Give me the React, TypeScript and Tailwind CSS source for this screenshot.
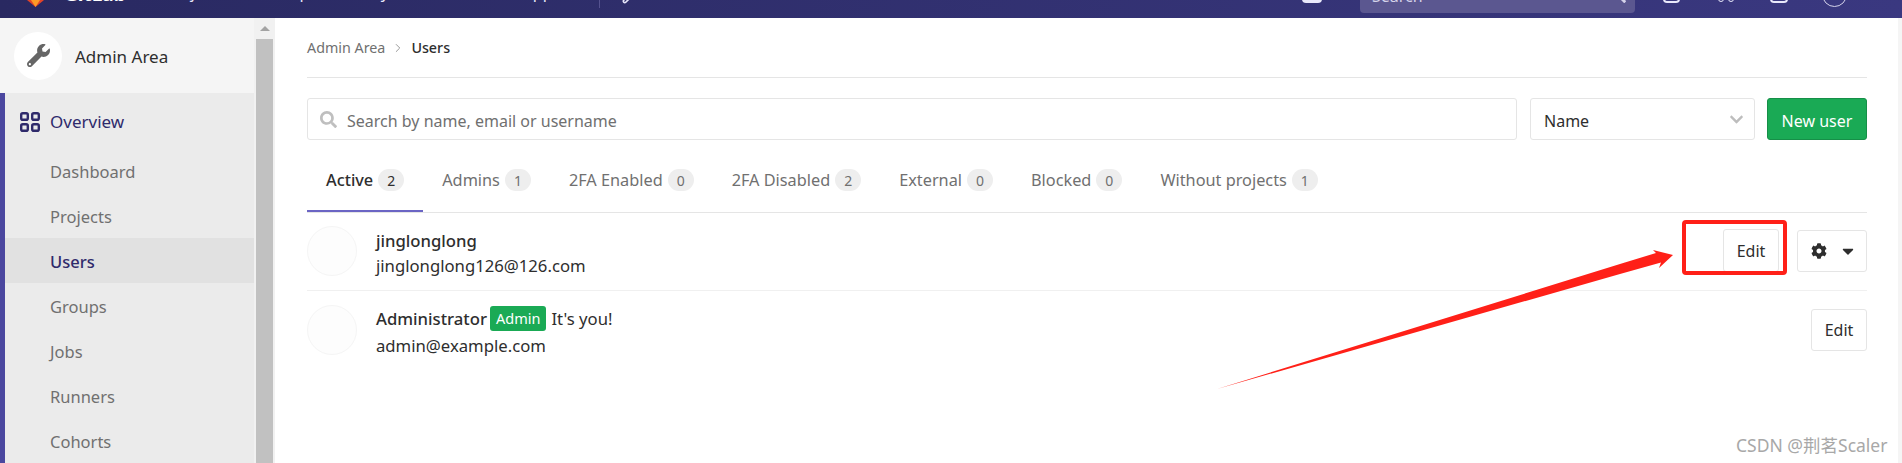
import { ChevronRight, Wrench } from "lucide-react"
import { FaCaretDown, FaChevronDown, FaCog, FaSearch, FaWrench } from "react-icons/fa"

const font = "font-['Noto_Sans','Noto_Sans_CJK_SC',sans-serif]"

const tabs = [
  { label: "Active", count: 2, active: true },
  { label: "Admins", count: 1 },
  { label: "2FA Enabled", count: 0 },
  { label: "2FA Disabled", count: 2 },
  { label: "External", count: 0 },
  { label: "Blocked", count: 0 },
  { label: "Without projects", count: 1 },
]

const sideLinks = ["Dashboard", "Projects", "Users", "Groups", "Jobs", "Runners", "Cohorts"]

function OverviewIcon() {
  return (
    <svg width="20" height="20" viewBox="0 0 20 20" fill="none" stroke="#2f2a6b" strokeWidth="2.4">
      <rect x="1.2" y="1.2" width="6.6" height="6.6" rx="1.6" />
      <rect x="12.2" y="1.2" width="6.6" height="6.6" rx="1.6" />
      <rect x="1.2" y="12.2" width="6.6" height="6.6" rx="1.6" />
      <rect x="12.2" y="12.2" width="6.6" height="6.6" rx="1.6" />
    </svg>
  )
}

// the screenshot is cut off at the top, so the bar's content hangs above the page edge
function TopBar() {
  return (
    <header className="h-[18px] overflow-hidden bg-gradient-to-r from-[#292961] to-[#3a3880] text-white">
      <div className="-mt-[22px] flex h-[40px] items-start text-[16px] leading-[22px] text-[#e6e6fa]">
        <svg width="17" height="7" viewBox="0 0 17 7" className="ml-[27px] mt-[22px] shrink-0">
          <path d="M8.5 7 L0 0 L17 0 Z" fill="#e24329" />
          <path d="M8.5 7 L4 0 L13 0 Z" fill="#fc9a26" />
        </svg>
        <span className="ml-[20px] mt-[3px] w-[61px] text-[19px] font-bold leading-[27px] text-white">GitLab</span>
        <span className="ml-[40px] mt-[3px] w-[65px]">Projects</span>
        <span className="ml-[32px] mt-[3px] w-[60px]">Groups</span>
        <span className="ml-[13px] mt-[3px] w-[60px]">Activity</span>
        <span className="ml-[15px] mt-[3px] w-[85px]">Milestones</span>
        <span className="ml-[15px] mt-[3px] w-[70px]">Snippets</span>
        <div className="ml-[19px] mt-[14px] h-[16px] w-px bg-[#55528f]" />
        <Wrench className="ml-[22px] mt-[10px] h-[16px] w-[16px]" strokeWidth={2.5} />
        <div className="flex-1" />
        <div className="mt-[6px] h-[19px] w-[20px] rounded-[4px] bg-[#e9e9fb]" />
        <div className="relative ml-[38px] mt-[2px] h-[33px] w-[275px] rounded-[4px] bg-[#5b5790] pl-[12px] pt-[5px] text-[#d5d3ea]">
          Search
          <FaSearch className="absolute right-[9px] top-[6px] h-[17px] w-[17px]" />
        </div>
        <div className="ml-[28px] mt-[6px] h-[19px] w-[17px] rounded-[4px] border-2 border-[#e9e9fb]" />
        <div className="ml-[38px] mt-[6px] flex h-[18px] w-[16px] justify-between">
          <div className="h-[6px] w-[6px] self-end rounded-full border-[1.5px] border-[#e9e9fb]" />
          <div className="h-[6px] w-[6px] self-end rounded-full border-[1.5px] border-[#e9e9fb]" />
        </div>
        <div className="ml-[36px] mt-[6px] h-[19px] w-[18px] rounded-[4px] border-2 border-[#e9e9fb]" />
        <div className="ml-[34px] mt-[4px] h-[25px] w-[25px] rounded-full border border-[#d5d3ea]" />
        <div className="w-[55px]" />
      </div>
    </header>
  )
}

function Sidebar() {
  return (
    <aside className="relative flex w-[275px] shrink-0">
      <div className="w-[254px] bg-[#ebebeb]">
        <div className="flex h-[75px] items-center bg-[#f5f5f5] pl-[14px]">
          <div className="flex h-[48px] w-[48px] items-center justify-center rounded-full bg-white">
            <FaWrench className="h-[23px] w-[23px] text-[#666]" />
          </div>
          <span className="ml-[13px] pt-[2px] text-[17px] text-[#2e2e2e]">Admin Area</span>
        </div>
        <div className="h-[370px] border-l-[5px] border-[#4b479f]">
          <div className="flex h-[55px] items-center pl-[15px] pt-[3px] text-[17px] text-[#2f2a6b]">
            <OverviewIcon />
            <span className="ml-[10px]">Overview</span>
          </div>
          {sideLinks.map((link) => (
            <div
              key={link}
              className={
                link === "Users"
                  ? "flex h-[45px] items-center bg-[#e1e1e1] pl-[45px] pt-[4px] text-[16.5px] font-medium text-[#2f2a6b]"
                  : "flex h-[45px] items-center pl-[45px] pt-[4px] text-[16.5px] text-[#707070]"
              }
            >
              {link}
            </div>
          ))}
        </div>
      </div>
      <div className="flex w-[21px] flex-col bg-[#f1f1f1] pl-[2px] pr-[2px]">
        <div className="flex h-[21px] items-center justify-center">
          <div className="h-0 w-0 border-x-[5px] border-b-[5px] border-x-transparent border-b-[#a3a3a3]" />
        </div>
        <div className="flex-1 bg-[#c1c1c1]" />
      </div>
    </aside>
  )
}

function UserRow({ children, actions, first }: { children: React.ReactNode; actions: React.ReactNode; first?: boolean }) {
  return (
    <div className={first ? "flex h-[78px] items-center border-b border-[#f0f0f0] pb-[2px]" : "flex h-[77px] items-center"}>
      <div className="h-[50px] w-[50px] shrink-0 rounded-full border border-[#f5f5f5] bg-[#fdfdfd]" />
      <div className="ml-[19px] mt-[4px] flex-1 text-[16.7px] text-[#2e2e2e]">{children}</div>
      {actions}
    </div>
  )
}

export default function App() {
  return (
    <div className={`relative h-[463px] w-[1902px] overflow-hidden bg-white ${font}`}>
      <TopBar />
      <div className="flex h-[445px]">
        <Sidebar />
        <main className="flex-1 pl-[32px] pr-[31px]">
          <div className="flex h-[60px] items-center border-b border-[#e5e5e5] text-[14.3px]">
            <span className="text-[#707070]">Admin Area</span>
            <ChevronRight className="mx-[6px] h-[14px] w-[14px] text-[#8c8c8c]" strokeWidth={1.5} />
            <span className="font-medium text-[#2e2e2e]">Users</span>
          </div>
          <div className="mt-[20px] flex h-[42px] text-[16px]">
            <div className="flex flex-1 items-center rounded-[3px] border border-[#e5e5e5] pl-[12px] text-[#707070]">
              <FaSearch className="h-[17px] w-[17px] text-[#bfbfbf]" />
              <span className="ml-[10px] pt-[3px]">Search by name, email or username</span>
            </div>
            <div className="ml-[13px] flex w-[225px] items-center justify-between rounded-[3px] border border-[#e5e5e5] pl-[13px] pr-[10px] text-[#2e2e2e]">
              <span className="pt-[3px]">Name</span>
              <FaChevronDown className="h-[15px] w-[15px] text-[#bdbdbd]" />
            </div>
            <div className="ml-[12px] flex w-[100px] items-center justify-center rounded-[3px] border border-[#168f48] bg-[#1aaa55] pt-[3px] text-white">
              New user
            </div>
          </div>
          <div className="mt-[18px] flex h-[55px] items-start border-b border-[#e5e5e5] text-[16.3px]">
            {tabs.map((tab) => (
              <div
                key={tab.label}
                className={
                  tab.active
                    ? "flex h-[54px] items-center border-b-2 border-[#6b65c4] px-[19px] pb-[8px] font-medium text-[#2e2e2e]"
                    : "flex h-[54px] items-center border-b-2 border-transparent px-[19px] pb-[8px] text-[#707070]"
                }
              >
                {tab.label}
                <span className="ml-[5px] flex h-[22px] w-[26px] items-center justify-center rounded-full bg-[#eeeeee] text-[14px] font-normal">
                  {tab.count}
                </span>
              </div>
            ))}
          </div>
          <UserRow
            first
            actions={
              <div className="flex items-center">
                <div className="flex h-[43px] w-[56px] items-center justify-center rounded-[3px] border border-[#e5e5e5] text-[16px] text-[#2e2e2e]">
                  Edit
                </div>
                <div className="ml-[18px] flex h-[42px] w-[70px] items-center justify-center gap-[12px] rounded-[3px] border border-[#e5e5e5] pl-[3px] text-[#2e2e2e]">
                  <FaCog className="h-[16px] w-[16px]" />
                  <FaCaretDown className="h-[18px] w-[18px]" />
                </div>
              </div>
            }
          >
            <div className="font-medium leading-[25px]">jinglonglong</div>
            <div className="leading-[25px]">jinglonglong126@126.com</div>
          </UserRow>
          <UserRow
            actions={
              <div className="flex h-[42px] w-[56px] items-center justify-center rounded-[3px] border border-[#e5e5e5] text-[16px] text-[#2e2e2e]">
                Edit
              </div>
            }
          >
            <div className="flex items-center leading-[25px]">
              <span className="font-medium">Administrator</span>
              <span className="ml-[3px] mr-[5px] flex h-[25px] items-center rounded-[3px] bg-[#1aaa55] px-[6px] text-[14.5px] text-white">
                Admin
              </span>
              It's you!
            </div>
            <div className="mt-[2px] leading-[25px]">admin@example.com</div>
          </UserRow>
        </main>
        <div className="w-[4px] bg-[#f5f5f5]" />
      </div>

      {/* red annotation drawn over the screenshot */}
      <div className="absolute left-[1682px] top-[220px] h-[55px] w-[105px] rounded-[4px] border-[4px] border-[#ff2018]" />
      <svg className="absolute left-0 top-0" width="1902" height="463" fill="#ff2018">
        <path d="M1217 389 L1620 264 L1656 253 L1653 250 L1673 255 L1659 268 L1661 262.5 L1620 274 Z" />
      </svg>
      <div className="absolute left-[1736px] top-[433px] text-[17.5px] leading-[24px] text-[#a8a8a8]">CSDN @荆茗Scaler</div>
    </div>
  )
}
